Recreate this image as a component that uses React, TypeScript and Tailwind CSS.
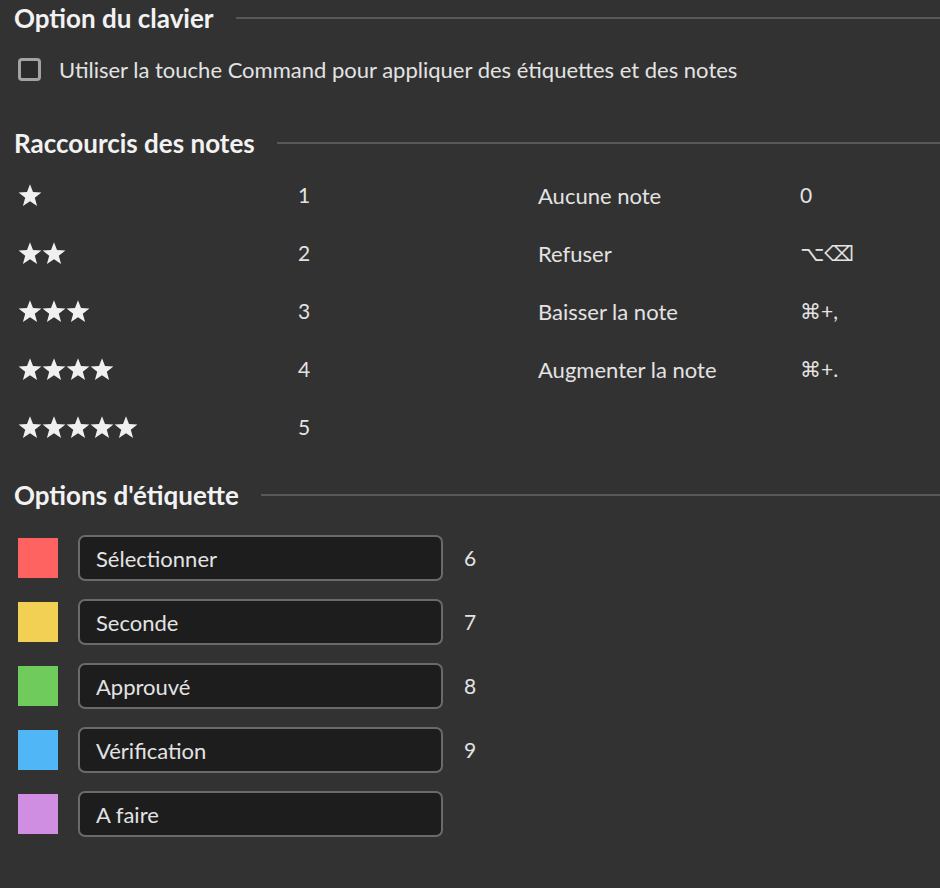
import React from 'react'

const labels = [
  { name: 'Sélectionner', color: 'bg-[#fe6261]', key: '6' },
  { name: 'Seconde', color: 'bg-[#f2d054]', key: '7' },
  { name: 'Approuvé', color: 'bg-[#6fcb5c]', key: '8' },
  { name: 'Vérification', color: 'bg-[#50b6f6]', key: '9' },
  { name: 'A faire', color: 'bg-[#d08ee3]', key: '' },
]

const others = [
  { name: 'Aucune note', key: '0' },
  { name: 'Refuser', key: '⌥⌫' },
  { name: 'Baisser la note', key: '⌘+,' },
  { name: 'Augmenter la note', key: '⌘+.' },
]

function Star() {
  return (
    <svg viewBox="0 0 24 24" className="w-[24px] h-[24px] shrink-0">
      <path d="M12 1.2l3 7.9 8.4.4-6.6 5.3 2.3 8.1L12 18.3l-7.1 4.6 2.3-8.1L.6 9.5 9 9.1z" fill="#f0f0f0" />
    </svg>
  )
}

function SectionTitle({ title, className }: { title: string; className?: string }) {
  return (
    <div className={`flex items-center h-[36px] ${className ?? ''}`}>
      <h2 className="text-[26px] font-bold text-[#f2f2f2] leading-none whitespace-nowrap">{title}</h2>
      <div className="flex-1 h-[2px] bg-[#585858] ml-[22px]" />
    </div>
  )
}

export default function App() {
  return (
    <div
      className="w-[940px] h-[888px] bg-[#323232] pl-[14px] text-[#e3e3e3] overflow-hidden"
      style={{ fontFamily: 'Lato, "Noto Sans", "DejaVu Sans", sans-serif' }}
    >
      <SectionTitle title="Option du clavier" />

      {/* Keyboard option */}
      <label className="mt-[15px] h-[36px] flex items-center pl-[4px] gap-[18px]">
        <span className="w-[23px] h-[23px] rounded-[4px] border-[3px] border-[#a3a3a3] bg-[#2b2b2b]" />
        <span className="text-[22px]">Utiliser la touche Command pour appliquer des étiquettes et des notes</span>
      </label>

      <SectionTitle title="Raccourcis des notes" className="mt-[38px]" />

      {/* Rating shortcuts */}
      <div className="mt-[5px] grid grid-cols-[520px_1fr] pl-[4px]">
        <div>
          {[1, 2, 3, 4, 5].map((n) => (
            <div key={n} className="h-[58px] flex items-center">
              <div className="w-[280px] flex">
                {Array.from({ length: n }).map((_, i) => (
                  <Star key={i} />
                ))}
              </div>
              <span className="text-[21px]">{n}</span>
            </div>
          ))}
        </div>
        <div>
          {others.map((o) => (
            <div key={o.name} className="h-[58px] flex items-center text-[22px]">
              <span className="w-[262px]">{o.name}</span>
              <span className="text-[21px]" style={{ fontFamily: 'Lato, "DejaVu Sans", sans-serif' }}>{o.key}</span>
            </div>
          ))}
        </div>
      </div>

      <SectionTitle title="Options d'étiquette" className="mt-[21px]" />

      {/* Label options */}
      <div className="mt-[13px] pl-[4px]">
        {labels.map((l) => (
          <div key={l.name} className="h-[64px] flex items-center">
            <span className={`w-[40px] h-[40px] ${l.color}`} />
            <div className="ml-[20px] w-[365px] h-[46px] rounded-[7px] border-2 border-[#6a6a6a] bg-[#1d1d1d] flex items-center pl-[16px] text-[22px]">
              {l.name}
            </div>
            <span className="ml-[21px] text-[21px]">{l.key}</span>
          </div>
        ))}
      </div>
    </div>
  )
}
